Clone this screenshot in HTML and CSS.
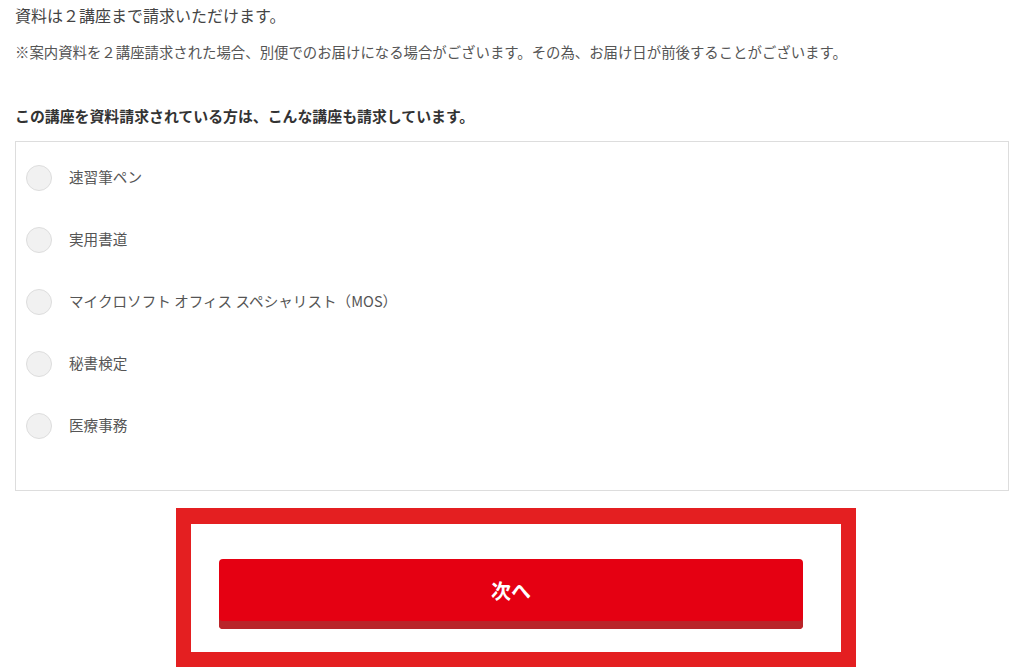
FILE: index.html
```html
<!DOCTYPE html>
<html lang="ja">
<head>
    <meta charset="UTF-8">
    <meta name="viewport" content="width=device-width, initial-scale=1.0">
    <title>資料請求</title>
    <link rel="stylesheet" href="styles.css">
</head>
<body>
    <div class="container">
        <p class="lead">資料は２講座まで請求いただけます。</p>
        <p class="note">※案内資料を２講座請求された場合、別便でのお届けになる場合がございます。その為、お届け日が前後することがございます。</p>

        <h2 class="section-title">この講座を資料請求されている方は、こんな講座も請求しています。</h2>

        <div class="course-box">
            <label class="course-item"><span class="radio"></span><span class="course-name">速習筆ペン</span></label>
            <label class="course-item"><span class="radio"></span><span class="course-name">実用書道</span></label>
            <label class="course-item"><span class="radio"></span><span class="course-name">マイクロソフト オフィス スペシャリスト（MOS）</span></label>
            <label class="course-item"><span class="radio"></span><span class="course-name">秘書検定</span></label>
            <label class="course-item"><span class="radio"></span><span class="course-name">医療事務</span></label>
        </div>

        <div class="highlight">
            <button class="next-btn">次へ</button>
        </div>
    </div>
</body>
</html>
```

FILE: styles.css
```css
body {
    margin: 0;
    padding: 0;
    background: #fff;
    font-family: "Noto Sans CJK JP", "Noto Sans", sans-serif;
    color: #333;
}

.container {
    padding: 0 15px;
}

.lead {
    margin: 3px 0 0;
    font-size: 16px;
    line-height: 24px;
    color: #444;
}

.note {
    margin: 14px 0 0;
    font-size: 14.4px;
    line-height: 22px;
    color: #555;
}

.section-title {
    margin: 42px 0 0;
    font-size: 14.9px;
    line-height: 22px;
    font-weight: bold;
    color: #333;
}

.course-box {
    margin-top: 14px;
    border: 1px solid #ddd;
    padding: 5px 0 33px 10px;
}

.course-item {
    display: flex;
    align-items: center;
    height: 62px;
    cursor: pointer;
}

.radio {
    width: 24px;
    height: 24px;
    border: 1px solid #ddd;
    border-radius: 50%;
    background: #f1f1f1;
    flex-shrink: 0;
}

.course-name {
    margin-left: 17px;
    padding-bottom: 3px;
    font-size: 14.6px;
    color: #555;
}

.highlight {
    box-sizing: border-box;
    margin: 17px 0 0 161px;
    width: 680px;
    border: 15px solid #e41f21;
    border-top-width: 16px;
    padding: 35px 0 23px 28px;
}

.next-btn {
    display: block;
    width: 584px;
    height: 70px;
    border: none;
    border-radius: 4px;
    background: #e50012;
    box-shadow: inset 0 -8px 0 #b9252a;
    color: #fff;
    font-family: inherit;
    font-size: 20px;
    font-weight: bold;
    padding: 0 0 8px;
    cursor: pointer;
}
```
